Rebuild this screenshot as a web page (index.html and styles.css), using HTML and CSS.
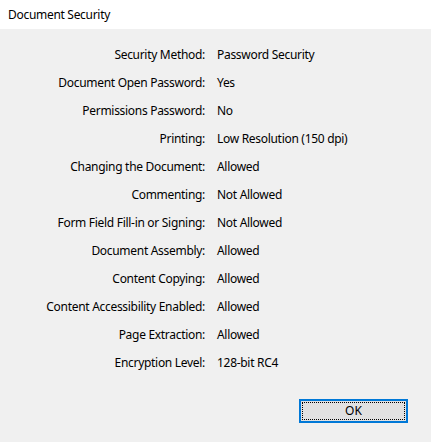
FILE: index.html
```html
<!DOCTYPE html>
<html>
<head>
<meta charset="utf-8">
<link rel="stylesheet" href="styles.css">
</head>
<body>
<div class="dialog">
  <div class="titlebar">Document Security</div>
  <div class="content">
    <div class="grid">
      <div class="label">Security Method:</div><div class="value">Password Security</div>
      <div class="label">Document Open Password:</div><div class="value">Yes</div>
      <div class="label">Permissions Password:</div><div class="value">No</div>
      <div class="label">Printing:</div><div class="value">Low Resolution (150 dpi)</div>
      <div class="label">Changing the Document:</div><div class="value">Allowed</div>
      <div class="label">Commenting:</div><div class="value">Not Allowed</div>
      <div class="label">Form Field Fill-in or Signing:</div><div class="value">Not Allowed</div>
      <div class="label">Document Assembly:</div><div class="value">Allowed</div>
      <div class="label">Content Copying:</div><div class="value">Allowed</div>
      <div class="label">Content Accessibility Enabled:</div><div class="value">Allowed</div>
      <div class="label">Page Extraction:</div><div class="value">Allowed</div>
      <div class="label">Encryption Level:</div><div class="value">128-bit RC4</div>
    </div>
    <div class="buttons">
      <button class="ok"><span class="focus">OK</span></button>
    </div>
  </div>
</div>
</body>
</html>
```

FILE: styles.css
```css
html, body {
  margin: 0;
  padding: 0;
}
body {
  width: 431px;
  height: 442px;
  background: #f0f0f0;
  font-family: "Noto Sans", "DejaVu Sans", sans-serif;
  font-size: 12px;
  letter-spacing: -0.3px;
  color: #000;
  overflow: hidden;
}
.dialog {
  display: flex;
  flex-direction: column;
  height: 442px;
}
.titlebar {
  height: 29px;
  background: #fff;
  padding-left: 8px;
  padding-top: 1px;
  line-height: 28px;
  box-sizing: border-box;
}
.content {
  flex: 1;
  display: flex;
  flex-direction: column;
  padding-top: 12px;
}
.grid {
  display: grid;
  grid-template-columns: 205px auto;
  column-gap: 12px;
  grid-auto-rows: 28px;
  line-height: 28px;
}
.label {
  text-align: right;
  white-space: nowrap;
}
.value {
  white-space: nowrap;
}
.buttons {
  display: flex;
  padding-left: 299px;
  padding-top: 22px;
}
.ok {
  width: 109px;
  height: 24px;
  box-sizing: border-box;
  border: 2px solid #0078d7;
  background: #e1e1e1;
  padding: 1px;
  margin: 0;
  font: inherit;
  color: #000;
  display: flex;
}
.focus {
  flex: 1;
  border: 1px dotted #000;
  display: flex;
  align-items: center;
  justify-content: center;
  line-height: 1;
}
```
